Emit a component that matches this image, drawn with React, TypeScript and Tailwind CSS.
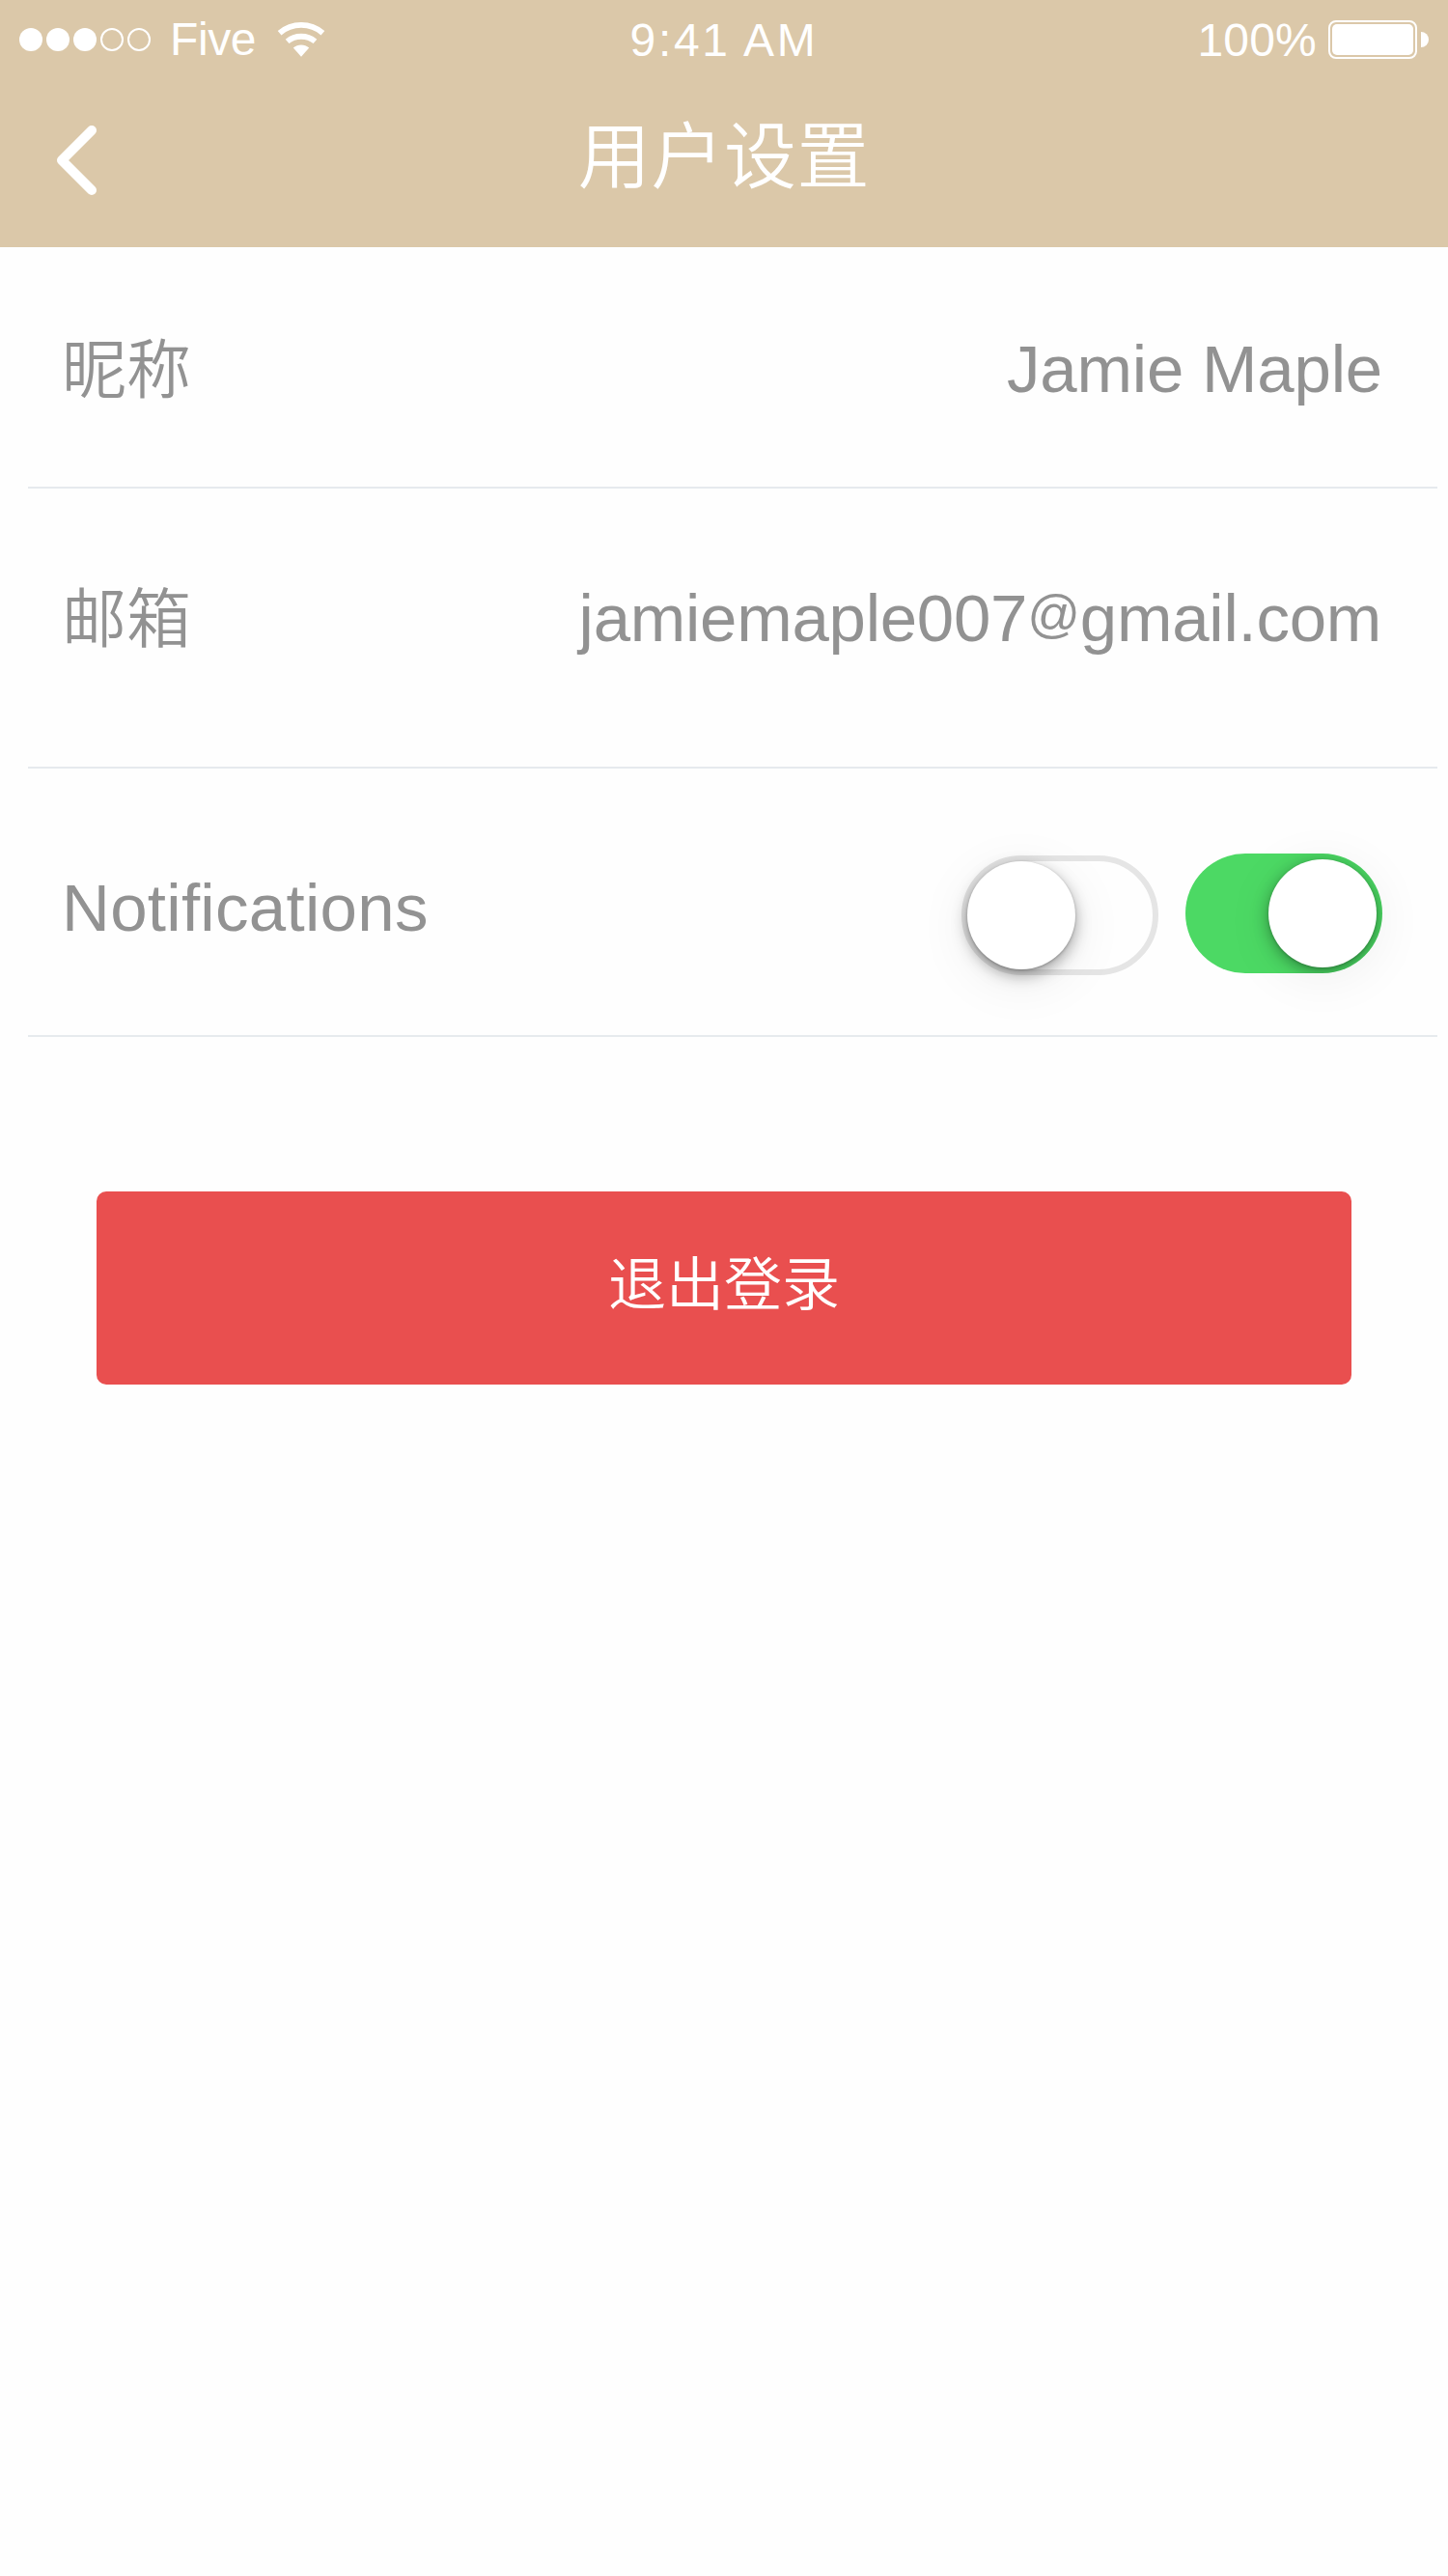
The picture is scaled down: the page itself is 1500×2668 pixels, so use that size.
import type { ReactNode } from "react";

function StatusBar() {
  return (
    <div className="grid h-20 grid-cols-3 items-center px-5 text-[48px] leading-[80px]">
      <div className="flex items-center">
        <div className="flex gap-1">
          {[true, true, true, false, false].map((on, i) => (
            <span
              key={i}
              className={on ? "size-6 rounded-full bg-white" : "size-6 rounded-full border-2 border-white"}
            />
          ))}
        </div>
        <span className="ml-5 tracking-[-0.4px]">Five</span>
        <svg className="ml-[22px]" width="50" height="36" viewBox="0 0 50 36" fill="none" stroke="#fff">
          <path d="M2.6 11.2C15.5 0.2 34.5 0.2 47.4 11.2" strokeWidth="5.8" />
          <path d="M10.6 19.9C18.8 13 31.2 13 39.4 19.9" strokeWidth="5.8" />
          <path d="M16.8 26.6C21.5 22.6 28.5 22.6 33.2 26.6L25 35.8Z" fill="#fff" stroke="none" />
        </svg>
      </div>
      <div className="pt-0.5 text-center tracking-[2.7px]">9:41 AM</div>
      <div className="flex items-center justify-end">
        <span className="pt-0.5 tracking-[0.2px]">100%</span>
        <div className="ml-3 flex h-10 w-[92px] rounded-[8px] border-2 border-white p-0.5">
          <div className="flex-1 rounded-[5px] bg-white" />
        </div>
        <div className="ml-1 h-4 w-2 rounded-r-full bg-white" />
      </div>
    </div>
  );
}

function Row({ label, className, children }: { label: ReactNode; className: string; children: ReactNode }) {
  return (
    <div
      className={`ml-[29px] mr-[11px] flex items-start justify-between border-b-2 border-[#e6eaee] pl-[35px] text-[69px] leading-[90px] ${className}`}
    >
      {label}
      {children}
    </div>
  );
}

function SwitchOff() {
  return (
    <div className="mt-[90px] h-[124px] w-[204px] rounded-full border-6 border-[#e5e5e5]">
      <div className="size-28 rounded-full bg-white shadow-[0_12px_56px_rgba(0,0,0,0.08),0_6px_16px_rgba(0,0,0,0.34),0_1px_3px_rgba(0,0,0,0.25)]" />
    </div>
  );
}

function SwitchOn() {
  return (
    <div className="relative mt-[88px] h-[124px] w-[204px]">
      <div className="absolute right-1.5 top-1.5 size-28 rounded-full shadow-[0_8px_56px_rgba(0,0,0,0.07)]" />
      <div className="relative flex h-[124px] w-[204px] justify-end overflow-hidden rounded-full bg-[#4cd964] p-1.5">
        <div className="size-28 rounded-full bg-white shadow-[0_8px_48px_rgba(0,0,0,0.08),0_4px_16px_rgba(0,0,0,0.34),0_1px_3px_rgba(0,0,0,0.22)]" />
      </div>
    </div>
  );
}

export default function App() {
  return (
    <div className="h-[2668px] w-[1500px] overflow-hidden bg-[#fefefe] font-['Liberation_Sans','Noto_Sans_CJK_SC',sans-serif] text-[#929292]">
      <header className="h-64 bg-[#dbc8a9] text-white">
        <StatusBar />
        <div className="grid h-[176px] grid-cols-[1fr_auto_1fr] items-start">
          <svg className="ml-[58px] mt-[49px]" width="44" height="74" viewBox="0 0 44 74" fill="none">
            <path d="M37 6L6 37L37 68" stroke="#fff" strokeWidth="10" strokeLinecap="round" strokeLinejoin="round" />
          </svg>
          <h1 className="mt-[33px] text-[75px] font-[350] leading-[100px] tracking-[0.6px]">用户设置</h1>
        </div>
      </header>

      <Row className="h-[250px] pr-[57px] pt-[82px]" label={<span className="mt-px text-[67px] font-[350]">昵称</span>}>
        <span className="tracking-[-0.2px]">Jamie Maple</span>
      </Row>
      <Row className="h-[290px] pr-[58px] pt-[90px]" label={<span className="mt-px text-[67px] font-[350]">邮箱</span>}>
        <span className="tracking-[-0.25px]">
          jamiemaple007
          <span className="inline-block -translate-y-[10px] text-[54px] leading-none">@</span>
          gmail.com
        </span>
      </Row>
      <Row className="h-[278px] pr-[57px]" label={<span className="pt-[100px] tracking-[0.3px]">Notifications</span>}>
        <div className="flex gap-7">
          <SwitchOff />
          <SwitchOn />
        </div>
      </Row>

      <button className="ml-[100px] mt-[160px] block h-[200px] w-[1300px] rounded-[10px] bg-[#e94f4f] pb-1 text-[60px] font-[350] leading-[196px] text-white">
        退出登录
      </button>
    </div>
  );
}
